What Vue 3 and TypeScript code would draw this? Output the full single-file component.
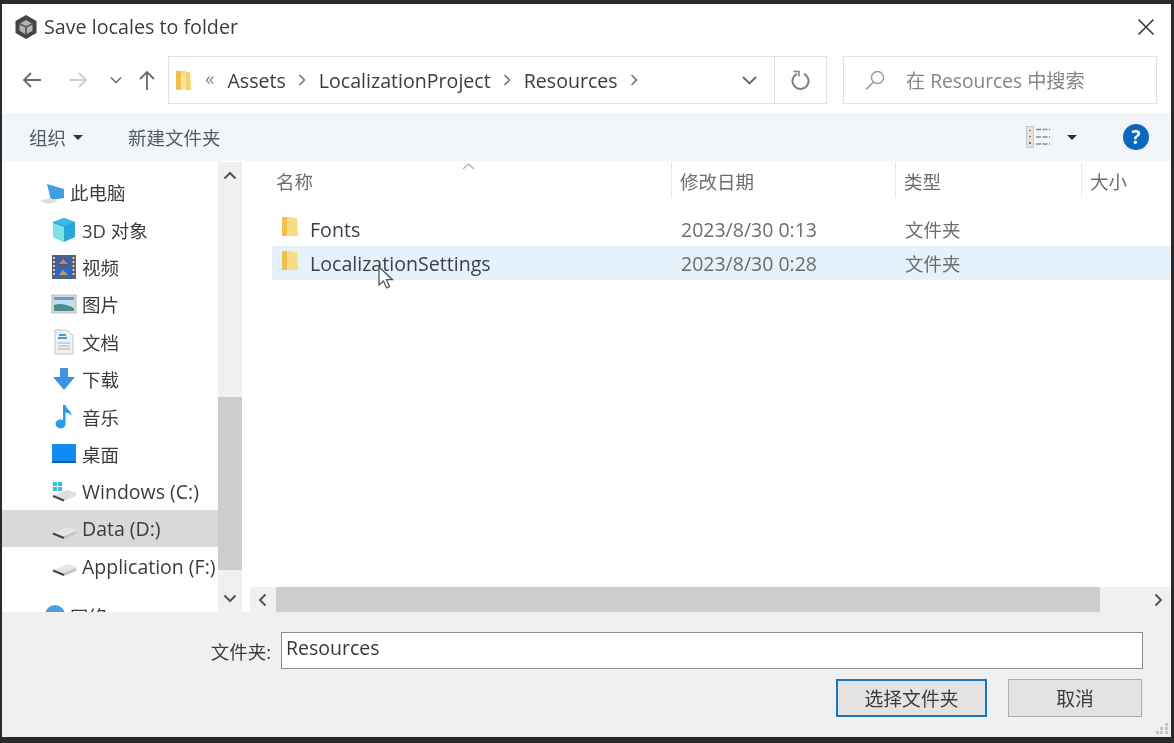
<script setup lang="ts">
interface NavItem { label: string; icon: string; top?: boolean; active?: boolean; latin?: boolean; group?: boolean }
const navItems: NavItem[] = [
  { label: '此电脑', icon: 'pc', top: true },
  { label: '3D 对象', icon: 'cube' },
  { label: '视频', icon: 'film' },
  { label: '图片', icon: 'pic' },
  { label: '文档', icon: 'doc' },
  { label: '下载', icon: 'down' },
  { label: '音乐', icon: 'note' },
  { label: '桌面', icon: 'desk' },
  { label: 'Windows (C:)', icon: 'win', latin: true },
  { label: 'Data (D:)', icon: 'drive', active: true, latin: true },
  { label: 'Application (F:)', icon: 'drive', latin: true },
  { label: '网络', icon: 'net', top: true, group: true },
]
const crumbs = ['Assets', 'LocalizationProject', 'Resources']
const files = [
  { name: 'Fonts', date: '2023/8/30 0:13', type: '文件夹', selected: false },
  { name: 'LocalizationSettings', date: '2023/8/30 0:28', type: '文件夹', selected: true },
]
</script>

<template>
  <div class="screen">
    <div class="dialog">
      <header class="title">
        <svg class="logo" width="24" height="26" viewBox="0 0 24 26">
          <path d="M12 1 22.500 7v12L12 25 1.500 19V7z" fill="#454545" />
          <path d="M12 6l6.500 3.700v7L12 20.500 5.500 16.700v-7z" fill="#b4b4b4" />
          <path d="M12 13v7.500M12 13 5.500 9.700M12 13l6.500-3.300" stroke="#5a5a5a" stroke-width="1.800" fill="none" />
        </svg>
        <span class="title-text">Save locales to folder</span>
        <svg class="close" width="18" height="18" viewBox="0 0 18 18">
          <path d="M1.500 1.500l15 15M16.500 1.500l-15 15" stroke="#333" stroke-width="1.500" fill="none" />
        </svg>
      </header>

      <div class="nav">
        <div class="nav-buttons">
          <svg class="nb back" width="22" height="18" viewBox="0 0 22 18"><path d="M20 9H3M10 2 3 9l7 7" stroke="#6a6a6a" stroke-width="1.800" fill="none" /></svg>
          <svg class="nb fwd" width="22" height="18" viewBox="0 0 22 18"><path d="M2 9h17M12 2l7 7-7 7" stroke="#cfcfcf" stroke-width="1.800" fill="none" /></svg>
          <svg class="nb drop" width="12" height="8" viewBox="0 0 12 8"><path d="M1 1.500l5 5 5-5" stroke="#777" stroke-width="1.700" fill="none" /></svg>
          <svg class="nb up" width="18" height="22" viewBox="0 0 18 22"><path d="M9 21V3M2 10l7-7 7 7" stroke="#6a6a6a" stroke-width="1.800" fill="none" /></svg>
        </div>
        <div class="address">
          <div class="path">
            <svg class="addr-folder" width="15" height="21" viewBox="0 0 15 21"><path d="M0 1h9l1 1h4l1 18H0z" fill="#f7d26e" /><path d="M0 1h5v18H0z" fill="#f0c04f" /><path d="M5 3h5v17H5z" fill="#fbe3a0" /></svg>
            <span class="raquo">«</span>
            <template v-for="c in crumbs" :key="c">
              <span class="crumb">{{ c }}</span>
              <svg class="sep" width="8" height="12" viewBox="0 0 8 12"><path d="M1.500 1l5 5-5 5" stroke="#666" stroke-width="1.400" fill="none" /></svg>
            </template>
            <svg class="addr-drop" width="15" height="9" viewBox="0 0 15 9"><path d="M1 1l6.500 6.500L14 1" stroke="#666" stroke-width="1.800" fill="none" /></svg>
          </div>
          <div class="refresh">
            <svg width="20" height="20" viewBox="0 0 20 20"><path d="M6 3.800a8 8 0 1 0 7 0" stroke="#808080" stroke-width="2" fill="none" /><path d="M2.500 1.500h5.500v5" stroke="#808080" stroke-width="1.500" fill="none" /></svg>
          </div>
        </div>
        <div class="search">
          <svg width="22" height="22" viewBox="0 0 22 22"><circle cx="13.500" cy="8.500" r="6" stroke="#9a9a9a" stroke-width="1.400" fill="none" /><path d="M9.500 13 2 20.500" stroke="#9a9a9a" stroke-width="1.600" /></svg>
          <span>在 Resources 中搜索</span>
        </div>
      </div>

      <div class="toolbar">
        <span class="tool">组织</span>
        <span class="caret"></span>
        <span class="tool new-folder">新建文件夹</span>
        <svg class="view" width="24" height="22" viewBox="0 0 24 22">
          <rect x="0.500" y="0.500" width="7" height="21" fill="#e6e2dc" stroke="#c8c8c8" />
          <path d="M4 4v1M4 10v1" stroke="#777" stroke-width="2" />
          <path d="M4 16v2" stroke="#b55" stroke-width="2" />
          <path d="M10 3.500h14M10 11h14M10 18h14" stroke="#8a8a8a" stroke-dasharray="5 1.500" stroke-width="1.300" />
        </svg>
        <span class="caret view-caret"></span>
        <span class="help">?</span>
      </div>

      <div class="body">
        <aside class="sidebar">
          <div v-for="item in navItems" :key="item.label" class="nav-row" :class="{ top: item.top, active: item.active, latin: item.latin, group: item.group }">
            <svg class="nav-icon" width="26" height="26" viewBox="0 0 26 26">
              <template v-if="item.icon === 'pc'">
                <path d="M7 5l17 5v9l-13 2z" fill="#3f9fe0" />
                <path d="M0 22l10-3 8 3-9 3z" fill="#dcdcdc" />
              </template>
              <template v-else-if="item.icon === 'cube'">
                <path d="M13 1l11 4v15l-11 5-11-5V5z" fill="#29a5d8" />
                <path d="M2 6l11 4v15L2 20z" fill="#7fe0e6" />
                <path d="M2 5l11-4 11 4-11 4z" fill="#3fb7e8" />
              </template>
              <template v-else-if="item.icon === 'film'">
                <rect x="1" y="1" width="24" height="24" fill="#5a5f6b" />
                <rect x="5" y="3" width="15" height="9" fill="#3b5fae" />
                <rect x="5" y="14" width="15" height="9" fill="#2f66c8" />
                <path d="M8 10l4-5 5 5z" fill="#b88b4a" />
                <path d="M8 21l4-5 5 5z" fill="#c59a55" />
                <path d="M3 3v20M22.500 3v20" stroke="#d6d6d6" stroke-width="1.800" stroke-dasharray="2 2" />
              </template>
              <template v-else-if="item.icon === 'pic'">
                <rect x="1" y="4" width="24" height="18" fill="#d8d8d8" stroke="#bdbdbd" />
                <rect x="3" y="6" width="20" height="14" fill="#bfe0f0" />
                <path d="M3 6h20v3H3z" fill="#5f9fd8" />
                <path d="M3 14q8-3 20 3v3H3z" fill="#4d8e8a" />
              </template>
              <template v-else-if="item.icon === 'doc'">
                <path d="M4 1h12l6 6v18H4z" fill="#f1f1f1" stroke="#c4c4c4" />
                <path d="M8 6h7M7 9h9" stroke="#39a0dc" stroke-width="2" />
                <path d="M7 14h12M7 17h12M7 20h12" stroke="#b0b0b0" />
              </template>
              <template v-else-if="item.icon === 'down'">
                <path d="M9 2h8v9h7L13 24 2 11h7z" fill="#3d93e3" />
              </template>
              <template v-else-if="item.icon === 'note'">
                <path d="M12 1h2.500c.5 4 6 5 6 11-2-3-4-3.500-6-3.500V20a5 4.500 0 1 1-2.500-4z" fill="#2b9be8" />
              </template>
              <template v-else-if="item.icon === 'desk'">
                <rect x="1" y="3" width="24" height="19" fill="#0f8cf0" />
                <path d="M1 20h24v2H1z" fill="#0a5fa8" />
              </template>
              <template v-else-if="item.icon === 'win'">
                <path d="M2 4h4v4H2zM7 4h4v4H7zM2 9h4v4H2zM7 9h4v4H7z" fill="#2cc3e0" />
                <path d="M2 18l14-6 9 3v3l-12 5z" fill="#dedede" />
                <path d="M2 18l11 4.500" stroke="#444" stroke-width="2" />
              </template>
              <template v-else-if="item.icon === 'drive'">
                <path d="M2 17l15-6 8 3v4l-12 5z" fill="#e6e6e6" />
                <path d="M25 15v3l-12 5v-3z" fill="#c4c4c4" />
                <path d="M2 17.500l11 4.500" stroke="#444" stroke-width="2" />
              </template>
              <template v-else>
                <circle cx="15" cy="12" r="10" fill="#4d9fe3" />
              </template>
            </svg>
            <span class="nav-label">{{ item.label }}</span>
          </div>
        </aside>
        <div class="vscroll">
          <svg class="arrow" width="14" height="9" viewBox="0 0 14 9"><path d="M1.500 7.500 7 2l5.500 5.500" stroke="#555" stroke-width="2" fill="none" /></svg>
          <div class="vtrack"><div class="vthumb"></div></div>
          <svg class="arrow low" width="14" height="9" viewBox="0 0 14 9"><path d="M1.500 1.500 7 7l5.500-5.500" stroke="#555" stroke-width="2" fill="none" /></svg>
        </div>

        <main class="main">
          <div class="list">
            <div class="head">
              <span class="col c-name">名称</span>
              <span class="col c-date">修改日期</span>
              <span class="col c-type">类型</span>
              <span class="col c-size">大小</span>
              <svg class="sort" width="13" height="7" viewBox="0 0 13 7"><path d="M1 6l5.500-5L12 6" stroke="#aaa" stroke-width="1.200" fill="none" /></svg>
            </div>
            <div class="rows">
              <div v-for="f in files" :key="f.name" class="row" :class="{ selected: f.selected }">
                <svg class="row-folder" width="16" height="21" viewBox="0 0 16 21"><path d="M0 1h10l1 1h4l1 18H0z" fill="#f9dc86" /><path d="M0 1h5v19H0z" fill="#f0c04f" /></svg>
                <span class="r-name">{{ f.name }}</span>
                <span class="r-date">{{ f.date }}</span>
                <span class="r-type">{{ f.type }}</span>
              </div>
            </div>
          </div>
          <div class="hscroll">
            <svg width="9" height="14" viewBox="0 0 9 14"><path d="M7.500 1.500 2 7l5.500 5.500" stroke="#555" stroke-width="2" fill="none" /></svg>
            <div class="hthumb"></div>
            <svg width="9" height="14" viewBox="0 0 9 14"><path d="M1.500 1.500 7 7l-5.500 5.500" stroke="#555" stroke-width="2" fill="none" /></svg>
          </div>
        </main>
      </div>

      <footer class="bottom">
        <div class="field">
          <label class="field-label">文件夹:</label>
          <div class="input">Resources</div>
        </div>
        <div class="actions">
          <button class="btn primary">选择文件夹</button>
          <button class="btn cancel">取消</button>
        </div>
        <svg class="grip" width="14" height="14" viewBox="0 0 14 14"><path d="M10 2h3v3h-3zM5 6h3v3H5zM10 6h3v3h-3zM1 10h3v3H1zM5 10h3v3H5zM10 10h3v3h-3z" fill="#c4c4c4" /></svg>
      </footer>

      <svg class="cursor" width="17" height="24" viewBox="0 0 17 24">
        <path d="M1 1v18l4.500-4 3 7 3-1.300-3-7h6z" fill="#fff" stroke="#555" stroke-width="1.300" />
      </svg>
    </div>
  </div>
</template>

<style>
html, body { margin: 0; background: #2a2a2a; }
</style>

<style scoped>
.screen {
  width: 1174px;
  height: 743px;
  overflow: hidden;
  box-sizing: border-box;
  padding: 4px 3px 6px 2px;
  background: #2a2a2a;
  font-family: "Open Sans", "Noto Sans CJK SC", sans-serif;
  font-size: 18.500px;
  color: #383838;
}
.dialog {
  position: relative;
  height: 733px;
  background: #fff;
  display: flex;
  flex-direction: column;
  filter: blur(0.5px);
}
.title {
  height: 46px;
  flex: none;
  display: flex;
  align-items: center;
  padding: 0 16px 0 12px;
}
.logo { margin-right: 6px; }
.title-text { flex: 1; font-size: 19.700px; color: #3c3c3c; margin-top: -2px; }
.nav {
  flex: none;
  display: flex;
  height: 48px;
  padding: 6px 14px 9px 0;
}
.nav-buttons { width: 166px; flex: none; display: flex; align-items: center; }
.nb { flex: none; }
.back { margin-left: 19px; }
.fwd { margin-left: 24px; }
.drop { margin-left: 21px; }
.up { margin-left: 16px; }
.address {
  width: 659px;
  flex: none;
  display: flex;
  border: 1px solid #e2e2e2;
  box-sizing: border-box;
}
.path { flex: 1; display: flex; align-items: center; padding-left: 7px; border-right: 1px solid #e2e2e2; font-size: 19.600px; }
.addr-folder { margin-right: 14px; flex: none; }
.raquo { color: #888; margin-right: 13px; margin-top: -4px; font-size: 19px; }
.crumb { color: #3c3c3c; }
.sep { margin: 0 12.500px; flex: none; }
.addr-drop { margin-left: auto; margin-right: 17px; flex: none; }
.refresh { width: 51px; flex: none; display: flex; align-items: center; justify-content: center; }
.search {
  margin-left: 16px;
  flex: 1;
  box-sizing: border-box;
  border: 1px solid #e2e2e2;
  display: flex;
  align-items: center;
  padding-left: 20px;
  gap: 20px;
  color: #858585;
  font-size: 19.200px;
}
.search span { margin-top: -1px; }
.toolbar {
  flex: none;
  height: 48px;
  margin-bottom: 1px;
  background: #f3f6f9;
  display: flex;
  align-items: center;
  padding-left: 27px;
}
.tool { color: #4f5d6b; font-size: 18.500px; margin-top: -1px; }
.caret {
  width: 0; height: 0;
  border: 5px solid transparent;
  border-top: 5px solid #333;
  border-bottom: 0;
  margin-left: 7px;
}
.new-folder { margin-left: 45px; }
.view { margin-left: auto; }
.view-caret { margin-left: 17px; }
.help {
  margin: 0 22px 0 46px;
  width: 26px; height: 26px;
  border-radius: 50%;
  background: #0c68bd;
  color: #fff;
  font-weight: 700;
  font-size: 19px;
  line-height: 26px;
  text-align: center;
}
.body { flex: none; height: 450px; display: flex; overflow: hidden; }
.sidebar {
  width: 216px;
  flex: none;
  overflow: hidden;
  box-sizing: border-box;
  padding-top: 11.500px;
}
.nav-row {
  height: 37.400px;
  display: flex;
  align-items: center;
  padding-left: 49px;
  white-space: nowrap;
  color: #3c3c3c;
}
.nav-row.latin { font-size: 19.500px; }
.nav-row.top { padding-left: 38px; }
.nav-row.top .nav-icon { margin-right: 4px; }
.nav-row.group { margin-top: 13px; }
.nav-row.active { background: #d9d9d9; }
.nav-icon { flex: none; margin-right: 5px; }
.vscroll {
  width: 24px;
  flex: none;
  background: #f0f0f0;
  display: flex;
  flex-direction: column;
  align-items: center;
}
.arrow { flex: none; margin: 9px 0 7px; }
.arrow.low { margin-bottom: 9px; }
.vtrack { flex: 1; position: relative; width: 100%; }
.vthumb { position: absolute; left: 0; right: 0; top: 210px; height: 173px; background: #cdcdcd; }
.main { flex: 1; margin-left: 8px; min-width: 0; display: flex; flex-direction: column; }
.list { flex: 1; min-height: 0; }
.head { position: relative; height: 36px; display: flex; align-items: center; color: #6d6d6d; }
.col { height: 36px; line-height: 40px; box-sizing: border-box; flex: none; }
.c-name { width: 422px; padding-left: 26px; border-right: 1px solid #e8e8e8; }
.c-date { width: 224px; padding-left: 8px; border-right: 1px solid #e8e8e8; }
.c-type { width: 186px; padding-left: 8px; border-right: 1px solid #e8e8e8; }
.c-size { padding-left: 8px; color: #6d6d6d; }
.sort { position: absolute; left: 212px; top: 1px; }
.rows { padding-top: 14px; }
.row {
  height: 34px;
  margin-left: 22px;
  display: flex;
  align-items: center;
}
.row.selected { background: #e5f2fb; }
.row-folder { flex: none; margin-left: 10px; margin-right: 12px; margin-top: -6px; }
.r-name { width: 371px; color: #3a414a; flex: none; font-size: 19.600px; }
.r-date { width: 224px; color: #6d6d6d; flex: none; font-size: 19.500px; }
.r-type { color: #6d6d6d; }
.hscroll {
  height: 25px;
  flex: none;
  background: #f0f0f0;
  display: flex;
  align-items: center;
  padding: 0 8px;
}
.hthumb { height: 100%; width: 824px; margin: 0 auto 0 9px; background: #cdcdcd; }
.bottom {
  position: relative;
  flex: 1;
  background: #f0f0f0;
  box-sizing: border-box;
  padding: 20px 28px 0 0;
}
.field { display: flex; align-items: center; }
.field-label { width: 269px; flex: none; text-align: right; color: #3c3c3c; }
.input {
  flex: 1;
  margin-left: 10px;
  height: 37px;
  line-height: 30px;
  box-sizing: border-box;
  border: 1.500px solid #8e8e8e;
  background: #fff;
  padding-left: 4px;
  font-size: 19.500px;
}
.actions { display: flex; justify-content: flex-end; gap: 21px; margin-top: 10px; padding-right: 1px; }
.btn {
  height: 38px;
  box-sizing: border-box;
  font: inherit;
  font-size: 18.800px;
  color: #3c3c3c;
  background: #e3e3e3;
  border: 1.500px solid #adadad;
  padding: 0;
}
.primary { width: 151px; border: 2.500px solid #1c74bd; }
.cancel { width: 134px; }
.grip { position: absolute; right: 2px; bottom: 2px; }
.cursor { position: absolute; left: 376px; top: 262px; }
</style>
